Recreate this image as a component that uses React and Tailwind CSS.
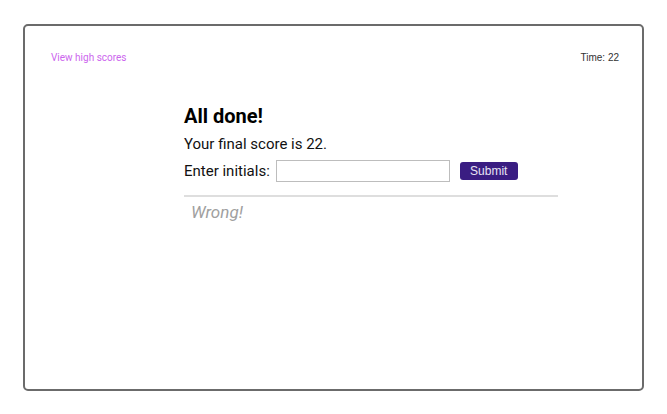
import React from 'react';

const App = () => {
    return (
        <div className="h-[414px] w-[667px] bg-white px-[23px] pt-[24px] pb-[23px]">
            <div className="flex h-full flex-col rounded-[5px] border-2 border-[#6b6b6b] px-[26px] pt-[24px]" style={{ fontFamily: 'Roboto, sans-serif' }}>
                <header className="flex items-center justify-between">
                    <a className="text-[10px] leading-[16px] text-[#cc66ee]">View high scores</a>
                    <span className="mr-[-3px] text-[10px] leading-[16px] text-[#333]" style={{ fontFamily: '"Liberation Sans", Arial, sans-serif' }}>Time: 22</span>
                </header>
                <main className="ml-[133px] mt-[37px] w-[374px]">
                    <h1 className="text-[20px] font-bold leading-[26px] text-black">All done!</h1>
                    <p className="mt-[5px] text-[15px] leading-[20px] text-[#111]">Your final score is 22.</p>
                    <div className="mt-[6px] flex items-center">
                        <label className="text-[15px] leading-[22px] text-[#111]">Enter initials:</label>
                        <input type="text" className="ml-[6px] h-[22px] w-[174px] border border-[#bdbdbd] bg-white px-1 text-[14px] outline-none" />
                        <button className="ml-[10px] h-[18px] w-[58px] rounded-[3px] bg-[#3a1d82] text-[12px] leading-[18px] text-[#e8e4f4]" style={{ fontFamily: '"Liberation Sans", Arial, sans-serif' }}>Submit</button>
                    </div>
                    <hr className="mt-[13px] border-t-2 border-[#dedede]" />
                    <p className="ml-[7px] mt-[4px] text-[17px] italic leading-[22px] text-[#a0a0a0]">Wrong!</p>
                </main>
            </div>
        </div>
    );
};

export default App;
